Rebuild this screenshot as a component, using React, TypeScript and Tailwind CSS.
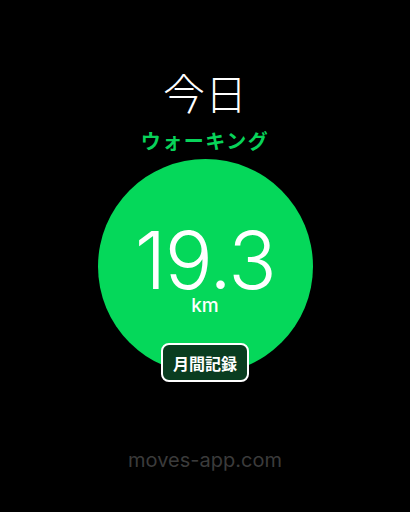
import React from "react"

export default function App() {
    return (
        <div className="flex min-h-[512px] w-full flex-col items-center bg-black pt-[64px] font-['Inter','Noto_Sans_CJK_JP',sans-serif]">
            {/* Title */}
            <h1 className="font-['Noto_Sans_CJK_JP',sans-serif] text-[42px] font-light leading-[56px] text-white">
                今日
            </h1>
            <p className="mt-[8px] font-['Noto_Sans_CJK_JP',sans-serif] text-[20px] font-bold leading-[26px] tracking-[1.5px] text-[#08d35a]">
                ウォーキング
            </p>

            {/* Distance circle */}
            <div className="relative mt-[5px] flex h-[215px] w-[215px] flex-col items-center rounded-full bg-[#05d85a]">
                <span className="mt-[71px] text-[80px] font-light leading-[60px] tracking-[-1.5px] text-white">
                    19.3
                </span>
                <span className="mt-[5px] text-[19px] font-medium leading-[22px] text-white">km</span>

                <div className="absolute bottom-[-8px] left-1/2 flex h-[39px] w-[88px] -translate-x-1/2 items-center justify-center rounded-[8px] border-2 border-white bg-[#0a3d20]">
                    <span className="font-['Noto_Sans_CJK_JP',sans-serif] text-[16px] font-bold leading-none text-white">
                        月間記録
                    </span>
                </div>
            </div>

            {/* Footer */}
            <p className="mt-[74px] text-[20px] leading-[24px] text-[#3b3b3b]">moves-app.com</p>
        </div>
    )
}
